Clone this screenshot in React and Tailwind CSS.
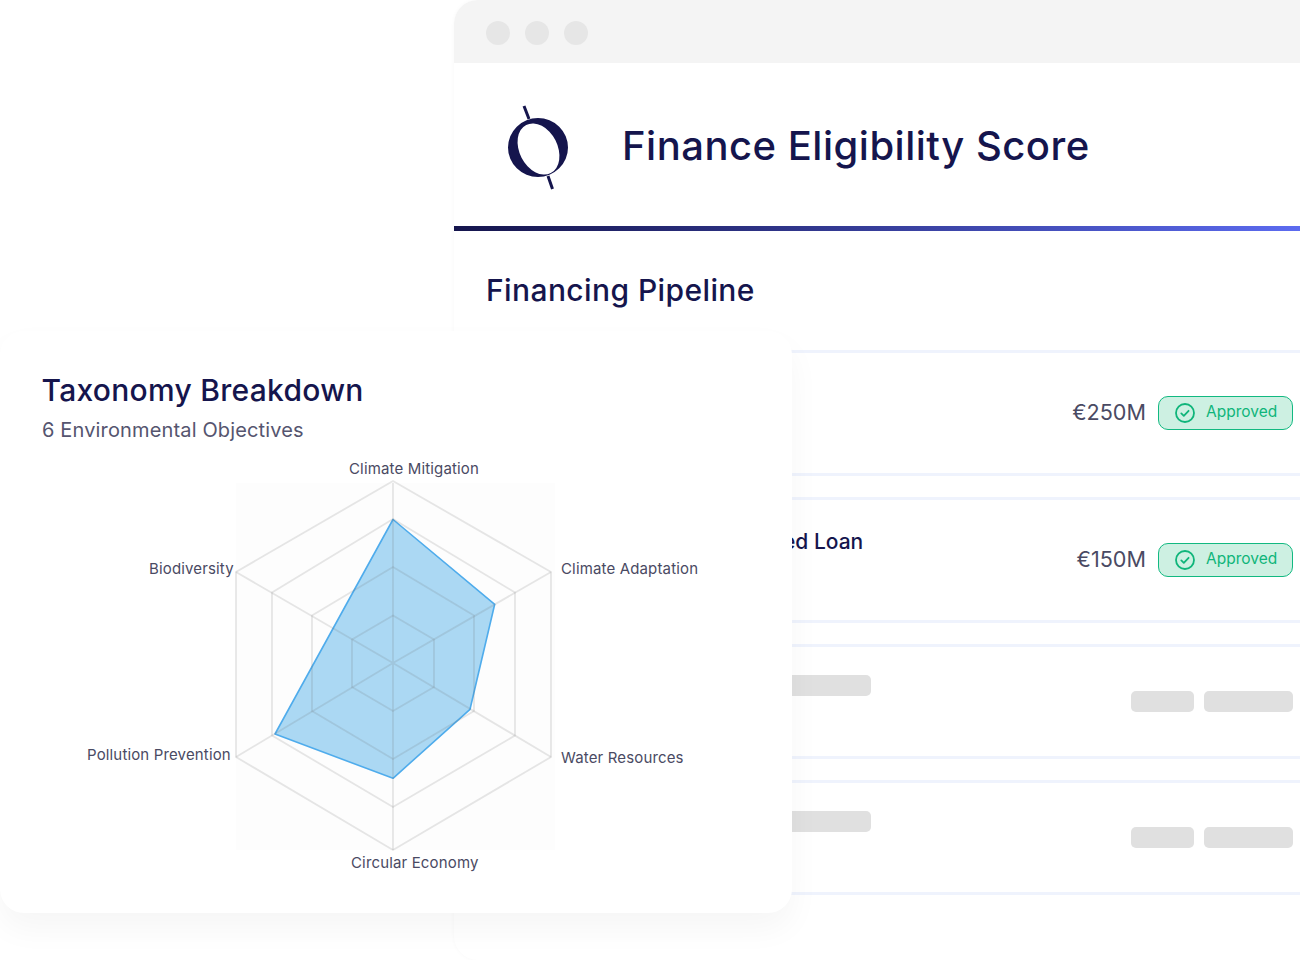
function Logo() {
  return (
    <svg width="72" height="90" viewBox="0 0 72 90" className="mt-[2px] text-[#15154d]">
      <path
        fill="currentColor"
        fillRule="evenodd"
        d="M7 46.5a30 29.5 0 1 0 60 0a30 29.5 0 1 0-60 0Z M25.2 23.9A27 19 63 0 1 49.8 72.1A27 19 63 0 1 25.2 23.9Z"
      />
      <path d="M23 5l5 13M47 75l4.5 13" stroke="currentColor" strokeWidth="3" />
    </svg>
  );
}

function Badge() {
  return (
    <div className="flex h-[34px] w-[135px] items-center gap-[11px] rounded-[10px] border-[1.5px] border-[#12b981] bg-[#cdf0e2] pl-[16px] text-[15.5px] leading-none text-[#0fb57a]">
      <svg width="20" height="20" viewBox="0 0 20 20" fill="none" stroke="currentColor" strokeWidth="1.8" strokeLinecap="round" strokeLinejoin="round">
        <circle cx="10" cy="10" r="9" />
        <path d="M6.3 10.4l2.5 2.4 4.8-5" />
      </svg>
      <span className="-mt-[1px]">Approved</span>
    </div>
  );
}

function Skeleton({ className }) {
  return <div className={`h-[21px] rounded-[5px] bg-[#e0e0e0] ${className}`} />;
}

function PipelineRow({ title, amount, tall }) {
  return (
    <div className={`flex items-center justify-between border-y-[3px] border-[#eff3fd] pr-[7px] ${tall ? 'h-[126px]' : 'h-[115px]'}`}>
      {title ? (
        <div className="-mt-[36px] ml-[144px] text-[21px] font-[450] text-[#15154d]">{title}</div>
      ) : tall ? (
        <div />
      ) : (
        <Skeleton className="-mt-[32px] ml-[150px] w-[267px]" />
      )}
      {amount ? (
        <div className="-mt-[1px] flex items-center gap-[12px]">
          <span className="text-[21.6px] text-[#4a4a63]">{amount}</span>
          <Badge />
        </div>
      ) : (
        <div className="flex gap-[10px]">
          <Skeleton className="w-[63px]" />
          <Skeleton className="w-[89px]" />
        </div>
      )}
    </div>
  );
}

function BrowserWindow() {
  return (
    <div className="absolute left-[454px] top-0 h-[960px] w-[846px] rounded-tl-[24px] rounded-bl-[24px] bg-white shadow-[0_0_4px_rgba(0,0,0,0.03)]">
      <div className="flex h-[63px] items-center gap-[15px] rounded-tl-[24px] bg-[#f4f4f4] pl-[32px] pt-[2px]">
        <div className="size-[24px] rounded-full bg-[#e6e6e6]" />
        <div className="size-[24px] rounded-full bg-[#e6e6e6]" />
        <div className="size-[24px] rounded-full bg-[#e6e6e6]" />
      </div>
      <div className="flex h-[163px] items-center pl-[47px]">
        <Logo />
        <h1 className="ml-[49px] mt-[3px] text-[40px] font-[450] tracking-[0.5px] text-[#15154d]">Finance Eligibility Score</h1>
      </div>
      <div className="h-[5px] bg-gradient-to-r from-[#15154d] to-[#5c6bf0]" />
      <h2 className="mt-[40px] pl-[32px] text-[30px] leading-[38px] font-[450] tracking-[0.4px] text-[#15154d]">Financing Pipeline</h2>
      <div className="mt-[41px] flex flex-col gap-[21px]">
        <PipelineRow tall amount="€250M" />
        <PipelineRow tall amount="€150M" title="Sustainability-Linked Loan" />
        <PipelineRow />
        <PipelineRow />
      </div>
    </div>
  );
}

const ringPoints = [
  '393,615.5 434,639.5 434,687 393,711 352,687 352,639.5',
  '393,567 474,615.5 474,711 393,759 312,711 312,615.5',
  '393,519 515,592.5 515,735.5 393,807 272,735.5 272,592.5',
  '393,481 551,572 551,757 393,850 236,757 236,572',
];

function Radar() {
  return (
    <svg className="absolute left-0 top-0" width="792" height="582" viewBox="0 331 792 582">
      <rect x="236" y="483" width="319" height="367" fill="#fdfdfd" />
      <polygon
        points="393,519.5 494.7,604.3 470,709.3 393,778.3 275,734"
        fill="#5ab4ea"
        fillOpacity="0.5"
        stroke="#4facec"
        strokeWidth="1.6"
        strokeLinejoin="round"
      />
      <g fill="none" stroke="#6b6b6b" strokeOpacity="0.16" strokeWidth="1.8">
        {ringPoints.map((p) => (
          <polygon key={p} points={p} />
        ))}
        <path d="M393 483V850M236 572L393 663L551 572M236 757L393 663L551 757" />
      </g>
    </svg>
  );
}

const labels = [
  { text: 'Climate Mitigation', className: 'left-[349px] top-[128px]' },
  { text: 'Biodiversity', className: 'left-[149px] top-[228px]' },
  { text: 'Climate Adaptation', className: 'left-[561px] top-[228px]' },
  { text: 'Pollution Prevention', className: 'left-[87px] top-[414px]' },
  { text: 'Water Resources', className: 'left-[561px] top-[417px]' },
  { text: 'Circular Economy', className: 'left-[351px] top-[522px]' },
];

function TaxonomyCard() {
  return (
    <div className="absolute left-0 top-[331px] h-[582px] w-[792px] rounded-[24px] bg-white pl-[42px] pt-[40px] shadow-[0_16px_32px_rgba(0,0,0,0.04)]">
      <Radar />
      <h2 className="relative -ml-[0.5px] text-[30px] leading-[38px] font-[450] tracking-[0.28px] text-[#15154d]">Taxonomy Breakdown</h2>
      <p className="relative mt-[6px] text-[20px] leading-[30px] tracking-[0.15px] text-[#55556f]">6 Environmental Objectives</p>
      {labels.map((l) => (
        <span key={l.text} className={`absolute text-[15px] leading-[20px] tracking-[0.15px] text-[#4a4a63] ${l.className}`}>
          {l.text}
        </span>
      ))}
    </div>
  );
}

export default function App() {
  return (
    <div className="relative h-[960px] w-[1300px] overflow-hidden bg-white font-['Inter',sans-serif]">
      <BrowserWindow />
      <TaxonomyCard />
    </div>
  );
}
